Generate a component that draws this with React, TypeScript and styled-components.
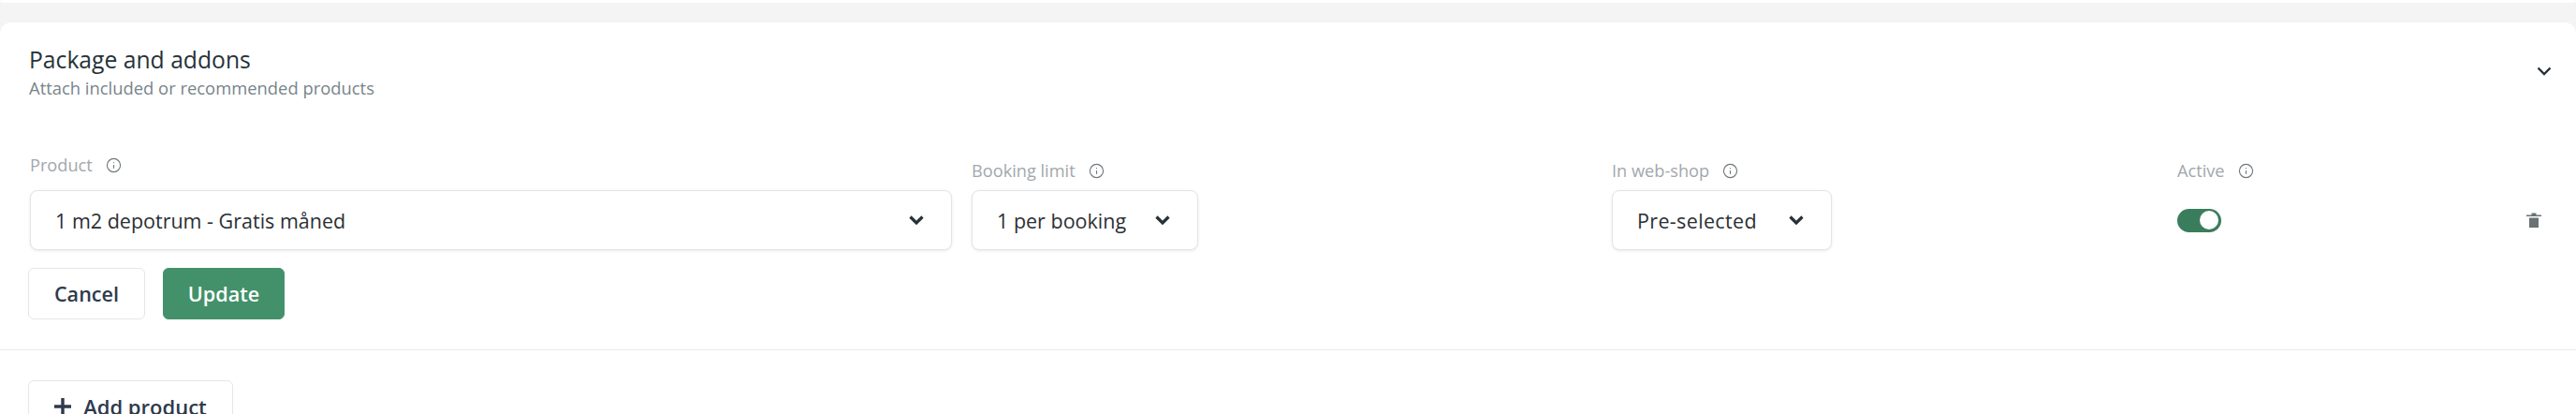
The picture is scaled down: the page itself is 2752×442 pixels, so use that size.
import { createGlobalStyle } from 'styled-components';
import styled from 'styled-components';
import { Info } from 'lucide-react';

const GlobalStyle = createGlobalStyle`
	html, body {
		margin: 0;
		padding: 0;
		height: 442px;
		overflow: hidden;
		background: #f4f4f4;
		font-family: 'Open Sans', 'Liberation Sans', sans-serif;
	}
`;

const Page = styled.div`
	display: flex;
	flex-direction: column;
	height: 442px;
	overflow: hidden;
`;

const PrevCard = styled.div`
	height: 3px;
	flex: none;
	background: #fff;
	border-radius: 0 0 12px 12px;
	margin-bottom: 21px;
`;

const Card = styled.section`
	flex: 1;
	background: #fff;
	border-radius: 12px 12px 0 0;
`;

const Header = styled.header`
	display: flex;
	justify-content: space-between;
	align-items: center;
	height: 104px;
	padding: 0 26px 0 31px;
`;

const Title = styled.h2`
	margin: 0;
	font-size: 24.7px;
	line-height: 34px;
	font-weight: 500;
	color: #263238;
`;

const Subtitle = styled.p`
	margin: 1px 0 0;
	font-size: 18.4px;
	line-height: 24px;
	color: #78848a;
`;

const FormRow = styled.div`
	display: grid;
	grid-template-columns: 1006px 684px 604px 373px 1fr;
	align-items: end;
	padding: 0 37px 0 32px;
	margin-top: 36px;
`;

const Field = styled.div`
	display: flex;
	flex-direction: column;
	align-items: flex-start;
`;

const LabelRow = styled.div<{ $raised?: boolean }>`
	display: flex;
	align-items: center;
	gap: 14px;
	height: 24px;
	margin-bottom: ${({ $raised }) => ($raised ? '15px' : '9px')};
	font-size: 18.2px;
	color: #a2a8ac;
	svg {
		color: #6f777b;
		flex: none;
	}
`;

const Select = styled.div<{ $width: number; $tracking?: number }>`
	display: flex;
	align-items: center;
	justify-content: space-between;
	box-sizing: border-box;
	width: ${({ $width }) => $width}px;
	height: 64px;
	padding: 0 29px 0 26px;
	background: #fff;
	border: 1px solid #e2e5e7;
	border-radius: 8px;
	box-shadow: 0 1px 3px rgba(38, 50, 56, 0.1);
	font-size: 21.5px;
	letter-spacing: ${({ $tracking }) => $tracking ?? 0}px;
	color: #2b3033;
`;

const ToggleCell = styled.div`
	display: flex;
	align-items: center;
	height: 64px;
`;

const Toggle = styled.div`
	display: flex;
	align-items: center;
	justify-content: flex-end;
	box-sizing: border-box;
	width: 47px;
	height: 25px;
	padding-right: 3px;
	background: #3a7d5c;
	border-radius: 13px;
`;

const Knob = styled.span`
	width: 20px;
	height: 20px;
	border-radius: 50%;
	background: #fff;
`;

const TrashCell = styled.div`
	display: flex;
	justify-content: flex-start;
	align-items: center;
	height: 64px;
	color: #6b7274;
`;

const Actions = styled.div`
	display: flex;
	gap: 19px;
	padding: 19px 0 0 30px;
`;

const Button = styled.button<{ $primary?: boolean; $width: number }>`
	display: flex;
	align-items: center;
	justify-content: center;
	gap: 12px;
	box-sizing: border-box;
	width: ${({ $width }) => $width}px;
	height: 55px;
	padding: 0;
	border-radius: 6px;
	border: 1px solid ${({ $primary }) => ($primary ? '#43916a' : '#e4e6e8')};
	background: ${({ $primary }) => ($primary ? '#43916a' : '#fff')};
	color: ${({ $primary }) => ($primary ? '#fff' : '#2e3a4c')};
	font-family: inherit;
	font-size: 21.6px;
	font-weight: 600;
`;

const Divider = styled.hr`
	margin: 32px 0 32px;
	height: 1px;
	border: 0;
	background: #e9ebec;
`;

const AddRow = styled.div`
	padding-left: 30px;
`;

const AddButton = styled(Button)`
	height: 56px;
	gap: 13px;
	font-size: 22px;
`;

const ChevronSvg = styled.svg`
	flex: none;
`;

function Chevron({ weight = 3.2 }: { weight?: number }) {
	return (
		<ChevronSvg width="16" height="10" viewBox="0 0 16 10" fill="none">
			<path d="M1.5 1.5L8 8L14.5 1.5" stroke="#263238" strokeWidth={weight} />
		</ChevronSvg>
	);
}

function TrashIcon() {
	return (
		<svg width="16" height="16" viewBox="0 0 16 16" fill="currentColor">
			<path d="M5.5 0.5h5V2.5H16V4H0V2.5H5.5z" />
			<path d="M3 5.5h10V16H3z" />
		</svg>
	);
}

function PlusIcon() {
	return (
		<svg width="18" height="18" viewBox="0 0 18 18" fill="#2e3a4c">
			<path d="M7.3 0h3.4v7.3H18v3.4h-7.3V18H7.3v-7.3H0V7.3h7.3z" />
		</svg>
	);
}

function FieldLabel({ text, raised }: { text: string; raised?: boolean }) {
	return (
		<LabelRow $raised={raised}>
			{text}
			<Info size={17} strokeWidth={1.6} />
		</LabelRow>
	);
}

export default function App() {
	return (
		<Page>
			<GlobalStyle />
			<PrevCard />
			<Card>
				<Header>
					<div>
						<Title>Package and addons</Title>
						<Subtitle>Attach included or recommended products</Subtitle>
					</div>
					<Chevron weight={2.4} />
				</Header>

				<FormRow>
					<Field>
						<FieldLabel text="Product" raised />
						<Select $width={985}>
							1 m2 depotrum - Gratis måned
							<Chevron />
						</Select>
					</Field>
					<Field>
						<FieldLabel text="Booking limit" />
						<Select $width={242}>
							1 per booking
							<Chevron />
						</Select>
					</Field>
					<Field>
						<FieldLabel text="In web-shop" />
						<Select $width={235} $tracking={0.35}>
							Pre-selected
							<Chevron />
						</Select>
					</Field>
					<Field>
						<FieldLabel text="Active" />
						<ToggleCell>
							<Toggle>
								<Knob />
							</Toggle>
						</ToggleCell>
					</Field>
					<TrashCell>
						<TrashIcon />
					</TrashCell>
				</FormRow>

				<Actions>
					<Button $width={125}>Cancel</Button>
					<Button $primary $width={130}>
						Update
					</Button>
				</Actions>

				<Divider />

				<AddRow>
					<AddButton $width={219}>
						<PlusIcon />
						Add product
					</AddButton>
				</AddRow>
			</Card>
		</Page>
	);
}
